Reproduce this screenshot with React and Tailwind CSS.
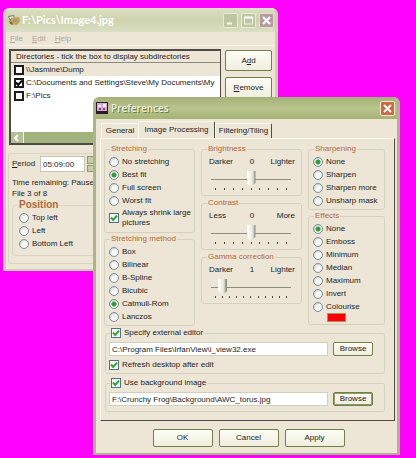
import clsx from "clsx";

const SHARPENING = ["None", "Sharpen", "Sharpen more", "Unsharp mask"];
const STRETCHING = ["No stretching", "Best fit", "Full screen", "Worst fit"];
const METHODS = [
  "Box",
  "Bilinear",
  "B-Spline",
  "Bicubic",
  "Catmull-Rom",
  "Lanczos",
];
const EFFECTS = [
  "None",
  "Emboss",
  "Minimum",
  "Median",
  "Maximum",
  "Invert",
  "Colourise",
];
const DIRECTORIES = [
  { path: "\\\\Jasmine\\Dump", ticked: false, selected: true },
  {
    path: "C:\\Documents and Settings\\Steve\\My Documents\\My",
    ticked: true,
  },
  { path: "F:\\Pics", ticked: false },
];

function Radio({ name, label, checked }) {
  return (
    <label className="flex h-[13px] items-center gap-[3px] whitespace-nowrap">
      <input
        type="radio"
        name={name}
        defaultChecked={checked}
        className="size-[10px] shrink-0 appearance-none rounded-full border border-[#7590a0] bg-[#f6f7f3] shadow-[inset_1px_1px_1px_#cfd4cf] checked:bg-[radial-gradient(circle,#2f9e3c_2px,#f1f5ec_3px)]"
      />
      {label}
    </label>
  );
}

function RadioList({ name, options, value }) {
  return options.map((option) => (
    <Radio
      key={option}
      name={name}
      label={option}
      checked={option === value}
    />
  ));
}

function Tick({ className }) {
  return (
    <svg
      viewBox="0 0 10 10"
      fill="none"
      strokeWidth="2"
      className={clsx("pointer-events-none absolute inset-0", className)}
    >
      <path d="M2 4.5 4.2 7 8 2.6" />
    </svg>
  );
}

function Checkbox({ label }) {
  return (
    <label className="flex items-center gap-[3px]">
      <span className="relative size-[10px] shrink-0">
        <input
          type="checkbox"
          defaultChecked
          className="block size-[10px] appearance-none border border-[#4d7488] bg-[#f7f8f3]"
        />
        <Tick className="stroke-[#35a03c]" />
      </span>
      <span>{label}</span>
    </label>
  );
}

function Group({ title, className, children }) {
  return (
    <fieldset
      className={clsx(
        "min-w-0 rounded-[3px] border border-[#d3d2bd] pl-1",
        className,
      )}
    >
      <legend className="ml-px h-3 px-px leading-3 whitespace-nowrap text-[#b0683a]">
        {title}
      </legend>
      {children}
    </fieldset>
  );
}

function SliderGroup({ title, low, mid, high, value, ticks }) {
  return (
    <Group title={title} className="h-[53px] pr-[6px]">
      <div className="grid h-[13px] grid-cols-3 items-center pl-[3px]">
        <span>{low}</span>
        <span className="text-center">{mid}</span>
        <span className="text-right">{high}</span>
      </div>
      <div className="pr-1 pl-[5px]">
        <input
          type="range"
          aria-label={title}
          defaultValue={value}
          className="mt-[3px] block h-4 w-full appearance-none bg-[linear-gradient(#8f8d80,#8f8d80)] bg-[length:100%_1px] bg-center bg-no-repeat [&::-webkit-slider-thumb]:h-4 [&::-webkit-slider-thumb]:w-[9px] [&::-webkit-slider-thumb]:appearance-none [&::-webkit-slider-thumb]:bg-[linear-gradient(90deg,#ffffff_1px,#f4f2ea_3px,#e4e2d6_6px,#8e9080_8px)] [&::-webkit-slider-thumb]:[clip-path:polygon(0_0,100%_0,100%_75%,50%_100%,0_75%)]"
        />
        <div className="mt-px flex justify-between px-1">
          {Array.from({ length: ticks }, (_, i) => (
            <span key={i} className="h-[2px] w-px bg-[#4a4a42]" />
          ))}
        </div>
      </div>
    </Group>
  );
}

function Button({ children, className }) {
  return (
    <button
      type="button"
      className={clsx(
        "rounded-[2px] border border-[#6f8048] bg-linear-to-b from-[#fdfdf6] to-[#f0eedd] text-center",
        className,
      )}
    >
      {children}
    </button>
  );
}

function PathRow({ label, value, focused }) {
  return (
    <div className="flex gap-[5px] pt-[3px] pr-[11px]">
      <input
        type="text"
        aria-label={label}
        defaultValue={value}
        className="h-[14px] min-w-0 flex-1 border border-[#d0d0bb] bg-white px-[2px] outline-none"
      />
      <Button
        className={clsx(
          "h-[14px] w-10 leading-3",
          focused && "shadow-[inset_0_0_0_1px_#8d9c66]",
        )}
      >
        Browse
      </Button>
    </div>
  );
}

function Tab({ label, active, className }) {
  return (
    <button
      type="button"
      role="tab"
      aria-selected={Boolean(active)}
      className={clsx(
        "rounded-t-[2px] border-t border-l border-[#faf8ef] whitespace-nowrap",
        active ? "h-[17px] border-r border-r-[#4d4c45] pb-px" : "h-[15px]",
        className,
      )}
    >
      {label}
    </button>
  );
}

function SlideshowWindow() {
  return (
    <section className="absolute top-2 left-[3px] h-[263px] w-[275px] overflow-hidden rounded-t-[6px] border-x-[3px] border-b-2 border-[#cbd0b0] bg-[#ede6d6]">
      <header className="flex h-6 items-center bg-linear-to-b from-[#dde0c6] via-[#cdd3ac] to-[#dbdfc4] pr-px pl-[2px]">
        <svg viewBox="0 0 12 12" className="size-3 shrink-0">
          <path d="M0 2l6-1 1 4-5 2z" fill="#6c7d86" />
          <path d="M1 3l4-1 1 2-4 1z" fill="#dfe6d4" />
          <path d="M3 4l8-1 1 4-3 4-6-1z" fill="#d99f3e" />
          <path d="M5 6l4-1v3H5z" fill="#6fa5c4" />
          <path d="M1 7l3 1 1 3-3-1z" fill="#8d6a2c" />
        </svg>
        <h1 className="ml-[2px] flex-1 font-[Lato] text-[11px] font-bold whitespace-nowrap text-white">
          F:\Pics\Image4.jpg
        </h1>
        <div className="flex gap-[3px]">
          <button
            type="button"
            aria-label="Minimize"
            className="grid size-[15px] place-items-center rounded-[2px] border border-[#e8ebd8] bg-[#bdc8a0]"
          >
            <svg viewBox="0 0 13 13" className="size-[13px]">
              <path d="M3 9.5h5" stroke="#fff" strokeWidth="2" />
            </svg>
          </button>
          <button
            type="button"
            aria-label="Maximize"
            className="grid size-[15px] place-items-center rounded-[2px] border border-[#e8ebd8] bg-[#bdc8a0]"
          >
            <svg viewBox="0 0 13 13" className="size-[13px]" fill="none">
              <path d="M2.5 3v7h8V3" stroke="#f4f6ea" />
              <path d="M2 3.5h9" stroke="#fff" strokeWidth="2" />
            </svg>
          </button>
          <button
            type="button"
            aria-label="Close"
            className="grid size-[15px] place-items-center rounded-[2px] border border-[#e2dccb] bg-[#b89ba0]"
          >
            <svg viewBox="0 0 13 13" className="size-[13px]">
              <path d="M3 3l7 7M10 3l-7 7" stroke="#fff" strokeWidth="2" />
            </svg>
          </button>
        </div>
      </header>

      <nav className="flex h-[14px] items-center gap-[9px] border-b border-[#f7f3e8] pl-1 text-[#aaa799]">
        <button type="button">
          <u>F</u>ile
        </button>
        <button type="button">
          <u>E</u>dit
        </button>
        <button type="button">
          <u>H</u>elp
        </button>
      </nav>

      <div className="mt-[3px] flex gap-1 pr-[3px] pl-[3px]">
        <div className="flex h-24 min-w-0 flex-1 flex-col border-2 border-r border-[#4c4b45] bg-white">
          <div className="h-[12px] border-b border-[#8d8b80] bg-[#ede6d6] pl-[5px] leading-3 whitespace-nowrap">
            Directories - tick the box to display subdirectories
          </div>
          {DIRECTORIES.map((dir) => (
            <label
              key={dir.path}
              className={clsx(
                "flex h-[13px] items-center gap-[2px] pl-[3px] whitespace-nowrap",
                dir.selected && "bg-[#ede6d6]",
              )}
            >
              <span className="relative size-[10px] shrink-0">
                <input
                  type="checkbox"
                  defaultChecked={dir.ticked}
                  className="block size-[10px] appearance-none border-2 border-[#1d1d1d] bg-white"
                />
                {dir.ticked && <Tick className="stroke-black" />}
              </span>
              {dir.path}
            </label>
          ))}
          <div className="mt-auto flex h-[11px] bg-[#a3b37d]">
            <button
              type="button"
              aria-label="Scroll left"
              className="grid w-[13px] place-items-center border-r border-[#f0f2e4] bg-[#b4c192]"
            >
              <svg viewBox="0 0 8 8" className="size-2" fill="none">
                <path d="M5 1 2 4l3 3" stroke="#fff" strokeWidth="2" />
              </svg>
            </button>
          </div>
        </div>
        <div className="flex w-[47px] flex-col gap-[6px] pt-px">
          <Button className="h-[21px]">
            A<u>d</u>d
          </Button>
          <Button className="h-[21px]">
            <u>R</u>emove
          </Button>
        </div>
      </div>

      <div className="mx-[2px] mt-2 h-[111px] rounded-[3px] border border-[#d8d5c2] pt-[2px] pl-[3px]">
        <div className="flex h-4 items-center">
          <label htmlFor="period" className="w-7">
            <u>P</u>eriod
          </label>
          <input
            id="period"
            type="text"
            defaultValue="05:09:00"
            className="h-4 w-[45px] border border-[#c5c7ae] bg-white px-[2px]"
          />
          <span className="ml-[2px] grid h-4 w-3 gap-px">
            <button
              type="button"
              aria-label="Increase period"
              className="border border-[#8d9a6b] bg-[#c3cda8]"
            />
            <button
              type="button"
              aria-label="Decrease period"
              className="border border-[#8d9a6b] bg-[#c3cda8]"
            />
          </span>
        </div>
        <p className="mt-[5px] leading-[11px]">Time remaining: Pause</p>
        <p className="leading-[11px]">File 3 of 8</p>
        <fieldset className="h-[57px] rounded-[3px] border border-[#d8d5c2] pl-[6px]">
          <legend className="h-3 text-[10px] leading-3 font-bold text-[#b0683a]">
            Position
          </legend>
          <RadioList
            name="position"
            options={["Top left", "Left", "Bottom Left"]}
          />
        </fieldset>
      </div>
    </section>
  );
}

function PreferencesDialog() {
  return (
    <section
      role="dialog"
      aria-label="Preferences"
      className="absolute top-[97px] left-[93px] w-[307px] overflow-hidden rounded-t-[6px] border-x-[3px] border-b-2 border-[#abb588] bg-[#ede6d6]"
    >
      <header className="flex h-[22px] items-center bg-linear-to-b from-[#a3b077] via-[#b9c58d] to-[#a5b374] pr-[2px]">
        <svg viewBox="0 0 12 12" className="size-3 shrink-0">
          <rect width="12" height="12" fill="#2b1b2e" />
          <rect x="1" y="1" width="10" height="8" fill="#d9a9cf" />
          <path d="M2 3h3v2H2zM7 2h3v3H7z" fill="#f6eaf4" />
          <path d="M3 6h2v2H3zM7 6h2v2H7z" fill="#7b4a86" />
        </svg>
        <h2 className="ml-[3px] flex-1 font-['Open_Sans'] text-[10px] font-semibold text-[#eef0dc] [text-shadow:1px_1px_0_#717c4c]">
          Preferences
        </h2>
        <button
          type="button"
          aria-label="Close"
          className="grid size-[15px] place-items-center rounded-[2px] border border-[#f0e6d6] bg-[#cd6a43]"
        >
          <svg viewBox="0 0 13 13" className="size-[13px]">
            <path d="M3 3l7 7M10 3l-7 7" stroke="#fff" strokeWidth="2" />
          </svg>
        </button>
      </header>

      <div role="tablist" className="flex h-[19px] items-end pl-[5px]">
        <Tab label="General" className="w-[37px]" />
        <Tab label="Image Processing" active className="w-[77px]" />
        <Tab
          label="Filtering/Tiling"
          className="w-[57px] border-r border-r-[#4d4c45]"
        />
      </div>

      <div className="mr-[2px] ml-1 border border-[#faf8ef] border-r-[#4d4c45] border-b-[#4d4c45] pt-1 pr-[9px] pb-2 pl-[3px]">
        <div className="grid grid-cols-[91px_1fr_77px] gap-[6px]">
          <div>
            <Group title="Stretching" className="h-[90px]">
              <RadioList
                name="stretching"
                options={STRETCHING}
                value="Best fit"
              />
              <div className="pt-px leading-[10px]">
                <Checkbox label="Always shrink large pictures" />
              </div>
            </Group>
            <Group title="Stretching method" className="pb-[2px]">
              <RadioList name="method" options={METHODS} value="Catmull-Rom" />
            </Group>
          </div>

          <div className="flex flex-col gap-px">
            <SliderGroup
              title="Brightness"
              low="Darker"
              mid="0"
              high="Lighter"
              value={50}
              ticks={9}
            />
            <SliderGroup
              title="Contrast"
              low="Less"
              mid="0"
              high="More"
              value={50}
              ticks={9}
            />
            <SliderGroup
              title="Gamma correction"
              low="Darker"
              mid="1"
              high="Lighter"
              value={10}
              ticks={11}
            />
          </div>

          <div>
            <Group title="Sharpening" className="pb-[2px]">
              <RadioList name="sharpening" options={SHARPENING} value="None" />
            </Group>
            <Group title="Effects" className="pb-[2px]">
              <RadioList name="effects" options={EFFECTS} value="None" />
              <button
                type="button"
                aria-label="Colour"
                className="ml-[14px] block h-[9px] w-[19px] border border-[#b98a6a] bg-[#ff0000]"
              />
            </Group>
          </div>
        </div>

        <fieldset className="mt-px ml-px rounded-[3px] border border-[#d3d2bd] pb-[2px] pl-[3px]">
          <legend className="ml-px h-3 px-px leading-3">
            <Checkbox label="Specify external editor" />
          </legend>
          <PathRow
            label="External editor"
            value="C:\Program Files\IrfanView\i_view32.exe"
          />
          <div className="mt-[3px] leading-3">
            <Checkbox label="Refresh desktop after edit" />
          </div>
        </fieldset>

        <fieldset className="mt-[3px] ml-px rounded-[3px] border border-[#d3d2bd] pb-[5px] pl-[3px]">
          <legend className="ml-px h-3 px-px leading-3">
            <Checkbox label="Use background image" />
          </legend>
          <PathRow
            label="Background image"
            value="F:\Crunchy Frog\Background\AWC_torus.jpg"
            focused
          />
        </fieldset>
      </div>

      <footer className="flex justify-center gap-[6px] pt-2 pb-[6px] pl-1">
        <Button className="h-[18px] w-[60px]">OK</Button>
        <Button className="h-[18px] w-[60px]">Cancel</Button>
        <Button className="h-[18px] w-[60px]">Apply</Button>
      </footer>
    </section>
  );
}

export default function App() {
  return (
    <main className="relative min-h-screen overflow-hidden bg-[#ff00ff] font-['Liberation_Sans',sans-serif] text-[8px] leading-3 text-[#1c1c1a]">
      <SlideshowWindow />
      <PreferencesDialog />
    </main>
  );
}
